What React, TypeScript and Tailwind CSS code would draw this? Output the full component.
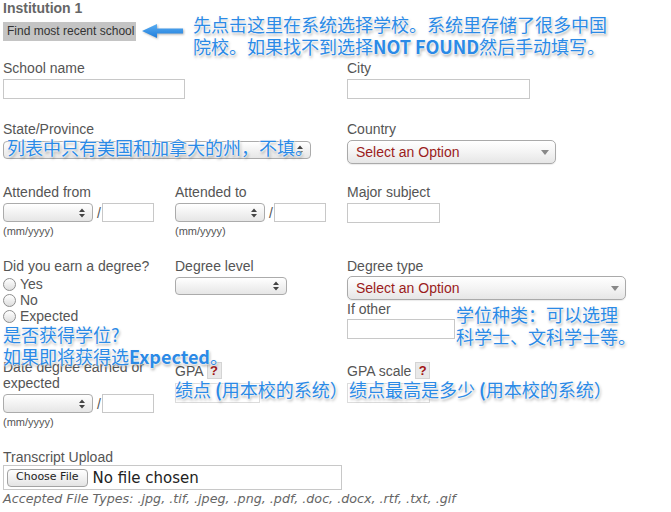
import type { ReactNode } from 'react'

const note =
  "absolute whitespace-nowrap font-['Noto_Sans_CJK_SC',sans-serif] text-[18px] leading-[22px] text-[#2b8ae6] [text-shadow:0_0_2px_#fff,0_0_2px_#fff,0_0_3px_#fff,1px_2px_3px_rgba(0,0,0,0.4)]"

function Label({ children, className = '' }: { children: ReactNode; className?: string }) {
  return <div className={`text-[14px] leading-4 text-[#555] ${className}`}>{children}</div>
}

function TextBox({ className }: { className: string }) {
  return <div className={`border border-[#c8c8c8] bg-white ${className}`} />
}

function NativeSelect({ className }: { className: string }) {
  return (
    <div className={`flex items-center justify-end pr-[7px] rounded-[4px] border border-[#ababab] bg-linear-to-b from-white to-[#e6e6e6] ${className}`}>
      <svg width="6" height="10" viewBox="0 0 6 10">
        <path d="M3 0.5 L6 4 H0Z M3 9.5 L6 6 H0Z" fill="#444" />
      </svg>
    </div>
  )
}

function ChosenSelect({ className }: { className: string }) {
  return (
    <div className={`flex items-center justify-between pl-[8px] pr-[6px] rounded-[5px] border border-[#aaa] bg-linear-to-b from-white via-[#f4f4f4] to-[#e6e6e6] shadow-[0_1px_1px_rgba(0,0,0,0.08)] ${className}`}>
      <span className="text-[14px] leading-4 text-[#9b1c1c]">Select an Option</span>
      <svg width="8" height="5" viewBox="0 0 8 5">
        <path d="M0 0H8L4 5Z" fill="#888" />
      </svg>
    </div>
  )
}

function DateField({ label }: { label: ReactNode }) {
  return (
    <div>
      {label}
      <div className="mt-[3px] flex items-center">
        <NativeSelect className="w-[90px] h-[19px]" />
        <span className="ml-[4px] text-[14px] leading-4 text-[#555]">/</span>
        <TextBox className="ml-[1px] w-[52px] h-[19px]" />
      </div>
      <div className="mt-[3px] text-[11px] leading-[13px] text-[#555]">(mm/yyyy)</div>
    </div>
  )
}

function Radio({ label }: { label: string }) {
  return (
    <div className="flex items-center h-4 gap-[4px]">
      <span className="w-[13px] h-[13px] rounded-full border border-[#8e8e8e] bg-linear-to-b from-white to-[#dedede]" />
      <span className="text-[14px] leading-4 text-[#555]">{label}</span>
    </div>
  )
}

function Help() {
  return (
    <span className="flex items-center justify-center w-[15px] h-[17px] bg-[#e9e9e9] border border-[#d4d4d4] text-[13px] font-bold text-[#a31515]">?</span>
  )
}

export default function App() {
  return (
    <div className="relative w-[671px] h-[512px] overflow-hidden bg-white font-['Liberation_Sans',Arial,sans-serif]">
      <div className="pl-[3px] pt-[1px]">
        <div className="text-[14px] leading-[14px] font-bold text-[#666]">Institution 1</div>
        <button className="block mt-[7px] w-[133px] h-[19px] pl-[4px] text-left bg-[#c4c4c4] text-[12px] leading-[19px] text-[#333]">
          Find most recent school
        </button>

        {/* school / city */}
        <div className="mt-[19px] grid grid-cols-[172px_172px_1fr]">
          <div>
            <Label>School name</Label>
            <TextBox className="mt-[3px] w-[182px] h-[20px]" />
          </div>
          <div />
          <div>
            <Label>City</Label>
            <TextBox className="mt-[3px] w-[183px] h-[20px]" />
          </div>
        </div>

        {/* state / country */}
        <div className="mt-[22px] grid grid-cols-[172px_172px_1fr]">
          <div className="col-span-2">
            <Label>State/Province</Label>
            <NativeSelect className="mt-[4px] w-[308px] h-[18px]" />
          </div>
          <div>
            <Label>Country</Label>
            <ChosenSelect className="mt-[3px] w-[209px] h-[24px]" />
          </div>
        </div>

        {/* attended */}
        <div className="mt-[20px] grid grid-cols-[172px_172px_1fr]">
          <DateField label={<Label>Attended from</Label>} />
          <DateField label={<Label>Attended to</Label>} />
          <div>
            <Label>Major subject</Label>
            <TextBox className="mt-[3px] w-[93px] h-[20px]" />
          </div>
        </div>

        {/* degree */}
        <div className="mt-[20px] grid grid-cols-[172px_172px_1fr]">
          <div>
            <Label>Did you earn a degree?</Label>
            <div className="mt-[2px]">
              <Radio label="Yes" />
              <Radio label="No" />
              <Radio label="Expected" />
            </div>
          </div>
          <div>
            <Label>Degree level</Label>
            <NativeSelect className="mt-[3px] w-[112px] h-[18px]" />
          </div>
          <div>
            <Label>Degree type</Label>
            <ChosenSelect className="mt-[2px] w-[279px] h-[24px]" />
            <Label className="mt-[1px]">If other</Label>
            <TextBox className="mt-[2px] w-[108px] h-[20px]" />
          </div>
        </div>

        {/* date earned / gpa */}
        <div className="mt-[20px] grid grid-cols-[172px_172px_1fr]">
          <DateField label={<Label className="w-[165px]">Date degree earned or expected</Label>} />
          <div>
            <div className="mt-[3px] flex items-center gap-[3px]">
              <span className="text-[14px] leading-4 text-[#555]">GPA</span>
              <Help />
            </div>
            <TextBox className="mt-[4px] w-[85px] h-[20px] border-[#dcdcdc]" />
          </div>
          <div>
            <div className="mt-[3px] flex items-center gap-[4px]">
              <span className="text-[14px] leading-4 text-[#555]">GPA scale</span>
              <Help />
            </div>
            <TextBox className="mt-[4px] w-[83px] h-[20px] border-[#dcdcdc]" />
          </div>
        </div>

        {/* transcript */}
        <div className="mt-[20px]">
          <Label>Transcript Upload</Label>
          <div className="flex items-center w-[339px] h-[25px] pl-[3px] border border-[#c8c8c8]">
            <span className="flex items-center h-[18px] px-[8px] rounded-[4px] border border-[#a3a3a3] bg-linear-to-b from-white to-[#e4e4e4] font-['DejaVu_Sans',sans-serif] text-[11px] text-[#222]">
              Choose File
            </span>
            <span className="ml-[5px] font-['DejaVu_Sans',sans-serif] text-[15px] leading-4 text-[#222]">No file chosen</span>
          </div>
          <div className="mt-[1px] font-['DejaVu_Sans',sans-serif] italic text-[12.7px] leading-[15px] text-[#666]">
            Accepted File Types: .jpg, .tif, .jpeg, .png, .pdf, .doc, .docx, .rtf, .txt, .gif
          </div>
        </div>
      </div>

      {/* annotations */}
      <svg className="absolute left-[142px] top-[23px] drop-shadow-[1px_1px_1px_rgba(0,0,0,0.3)]" width="42" height="16" viewBox="0 0 42 16">
        <defs>
          <linearGradient id="arr" x1="0" y1="0" x2="0" y2="1">
            <stop offset="0" stopColor="#5aaef2" />
            <stop offset="1" stopColor="#1f7ddb" />
          </linearGradient>
        </defs>
        <path d="M0 8 L15 1 L15 5.5 L41 5.5 L41 10.5 L15 10.5 L15 15 Z" fill="url(#arr)" />
      </svg>
      <div className={`${note} left-[193px] top-[13px]`}>
        <div>先点击这里在系统选择学校。系统里存储了很多中国</div>
        <div>
          院校。如果找不到选择<span className="font-bold">NOT FOUND</span>然后手动填写。
        </div>
      </div>
      <div className={`${note} left-[7px] top-[136px]`}>列表中只有美国和加拿大的州，不填。</div>
      <div className={`${note} left-[3px] top-[323px]`}>
        <div>是否获得学位?</div>
        <div>
          如果即将获得选<span className="font-bold">Expected</span>。
        </div>
      </div>
      <div className={`${note} left-[456px] top-[303px]`}>
        <div>学位种类：可以选理</div>
        <div>科学士、文科学士等。</div>
      </div>
      <div className={`${note} left-[175px] top-[378px]`}>
        绩点 <span className="font-bold">(</span>用本校的系统）
      </div>
      <div className={`${note} left-[349px] top-[378px]`}>
        绩点最高是多少 <span className="font-bold">(</span>用本校的系统）
      </div>
    </div>
  )
}
